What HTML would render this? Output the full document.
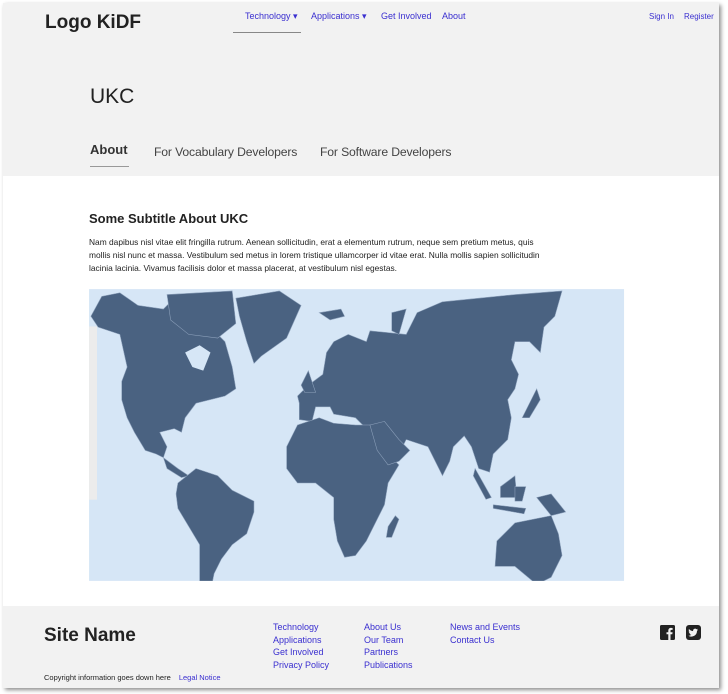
<!DOCTYPE html>
<html><head><meta charset="utf-8"><style>
*{margin:0;padding:0;box-sizing:border-box}
body{width:728px;height:694px;background:#fff;font-family:"Liberation Sans",Arial,sans-serif;position:relative;overflow:hidden;color:#222}
.page{position:absolute;left:3px;top:3px;width:716px;height:685px;background:#fff;box-shadow:2px 2px 4px rgba(0,0,0,.45)}
.hdr{position:absolute;left:0;top:0;width:716px;height:173px;background:#f2f2f2}
.a{position:absolute;white-space:nowrap}
.nav{font-size:9px;color:#3a2fd0}
.ftr{position:absolute;left:0;top:603px;width:716px;height:82px;background:#f2f2f2}
.fl{font-size:9px;color:#3a2fd0;line-height:12.5px}
</style></head><body>
<div class="page">
<div class="hdr">
<div class="a" style="left:42px;top:9px;font-size:19px;font-weight:bold;color:#222">Logo KiDF</div>
<div class="a nav" style="left:242px;top:8px">Technology ▾</div>
<div class="a nav" style="left:308px;top:8px">Applications ▾</div>
<div class="a nav" style="left:378px;top:8px">Get Involved</div>
<div class="a nav" style="left:439px;top:8px">About</div>
<div class="a" style="left:230px;top:29px;width:68px;height:1px;background:#888"></div>
<div class="a nav" style="left:646px;top:9px;font-size:8px">Sign In</div>
<div class="a nav" style="left:681px;top:9px;font-size:8px">Register</div>
<div class="a" style="left:87px;top:82px;font-size:21px;color:#222">UKC</div>
<div class="a" style="left:87px;top:139px;font-size:13px;font-weight:bold;color:#333">About</div>
<div class="a" style="left:87px;top:163px;width:39px;height:1px;background:#999"></div>
<div class="a" style="left:151px;top:142px;font-size:12.2px;letter-spacing:-0.15px;color:#444">For Vocabulary Developers</div>
<div class="a" style="left:317px;top:142px;font-size:12.2px;letter-spacing:-0.15px;color:#444">For Software Developers</div>
</div>
<div class="a" style="left:86px;top:208px;font-size:13px;font-weight:bold;color:#222">Some Subtitle About UKC</div>
<div class="a" style="left:86px;top:233px;width:458px;font-size:8.4px;line-height:13px;white-space:normal;color:#222">Nam dapibus nisl vitae elit fringilla rutrum. Aenean sollicitudin, erat a elementum rutrum, neque sem pretium metus, quis mollis nisl nunc et massa. Vestibulum sed metus in lorem tristique ullamcorper id vitae erat. Nulla mollis sapien sollicitudin lacinia lacinia. Vivamus facilisis dolor et massa placerat, at vestibulum nisl egestas.</div>
<div class="ftr">
<div class="a" style="left:41px;top:19px;font-size:19px;font-weight:bold;color:#222">Site Name</div>
<div class="a fl" style="left:270px;top:15px">Technology<br>Applications<br>Get Involved<br>Privacy Policy</div>
<div class="a fl" style="left:361px;top:15px">About Us<br>Our Team<br>Partners<br>Publications</div>
<div class="a fl" style="left:447px;top:15px">News and Events<br>Contact Us</div>
<div class="a" style="left:41px;top:67px;font-size:7.5px;color:#222">Copyright information goes down here <span style="color:#3a2fd0;margin-left:6px">Legal Notice</span></div>
<svg class="a" style="left:657px;top:19px" width="15" height="15" viewBox="0 0 15 15"><rect width="15" height="15" rx="1.5" fill="#222"/><path d="M10.5 15V9.3h1.8l.3-2.1h-2.1V5.9c0-.6.2-1 1-1h1.1V3a14 14 0 0 0-1.6-.1c-1.6 0-2.7 1-2.7 2.8v1.5H6.5v2.1h1.8V15z" fill="#f2f2f2"/></svg>
<svg class="a" style="left:683px;top:19px" width="15" height="15" viewBox="0 0 15 15"><rect width="15" height="15" rx="3" fill="#222"/><path d="M12 4.6c-.4.2-.8.3-1.1.3.4-.3.7-.6.9-1.1-.4.2-.8.4-1.3.5a2 2 0 0 0-3.4 1.8A5.6 5.6 0 0 1 3 4a2 2 0 0 0 .6 2.6c-.3 0-.6-.1-.9-.2 0 1 .7 1.8 1.6 2-.3.1-.6.1-.9 0 .3.8 1 1.4 1.9 1.4A4 4 0 0 1 2.4 10.7 5.6 5.6 0 0 0 11 6z" fill="#f2f2f2"/></svg>
</div>
</div>
<svg class="a" style="left:80px;top:280px" width="560" height="310" viewBox="0 0 1545 855">
<defs><clipPath id="c"><rect x="25" y="25" width="1476" height="805"/></clipPath></defs>
<rect x="25" y="25" width="1476" height="805" fill="#d6e6f6"/>
<g clip-path="url(#c)" fill="#4a6281" stroke="#8fa3bd" stroke-width="1.5">
<path d="M30 100L60 45 110 35 160 70 230 80 250 60 300 70 350 120 400 170 420 240 430 300 400 320 360 330 320 340 290 380 280 420 260 410 220 420 240 460 230 490 210 480 180 470 150 420 130 380 115 330 115 280 130 240 110 150 50 130Z"/>
<path d="M240 40L420 30 430 120 380 160 300 150 250 110Z"/>
<path d="M290 200L330 180 360 200 340 250 310 240Z" fill="#d6e6f6" stroke="none"/>
<path d="M430 50L550 30 610 70 570 160 500 210 480 230 460 170 440 100Z"/>
<path d="M230 490L270 520 300 540 280 545 240 520Z"/>
<path d="M270 560L320 520 380 540 420 580 480 610 480 640 460 700 420 730 390 770 370 810 360 860 370 900 345 905 330 850 330 730 300 680 270 630 265 590Z"/>
<path d="M600 320L630 290 670 260 680 200 700 170 740 150 790 170 800 140 900 150 930 90 1000 60 1100 50 1200 40 1330 30 1310 100 1280 130 1270 200 1240 170 1200 170 1190 220 1210 260 1200 300 1180 330 1190 380 1180 440 1140 480 1130 530 1100 520 1080 460 1060 430 1030 460 1020 500 1000 540 960 460 900 440 880 480 850 510 820 470 800 420 760 380 700 370 690 350 650 350 640 390 605 385 605 340Z"/>
<path d="M570 460L600 400 660 380 700 395 760 400 800 400 830 460 880 510 850 560 840 620 820 660 790 720 760 760 730 765 710 720 700 660 700 600 650 560 600 560 570 520Z"/>
<path d="M800 400L840 390 880 440 910 470 880 500 850 510 820 470Z"/>
<path d="M850 680L870 650 880 660 860 710 845 710Z"/>
<path d="M610 290L630 250 650 310 620 310Z"/>
<path d="M1220 380L1260 300 1270 330 1240 380Z"/>
<path d="M1090 520L1135 600 1120 605 1085 540Z"/>
<path d="M1160 570L1200 540 1205 600 1160 600Z"/>
<path d="M1200 570L1230 570 1220 610 1200 610Z"/>
<path d="M1260 600L1300 590 1340 640 1300 650Z"/>
<path d="M1140 620L1230 630 1225 645 1140 630Z"/>
<path d="M1145 790L1150 720 1200 670 1250 660 1300 650 1320 700 1330 760 1300 820 1260 840 1200 790Z"/>
<path d="M1255 860L1275 860 1265 880Z"/>
<path d="M1380 880L1400 840 1410 860 1390 900Z"/>
<path d="M660 90L720 80 730 100 690 110Z"/>
<path d="M860 90L900 80 880 150 860 140Z"/>
</g>
<rect x="25" y="128" width="22" height="478" fill="#ececec"/>
</svg>
</body></html>
